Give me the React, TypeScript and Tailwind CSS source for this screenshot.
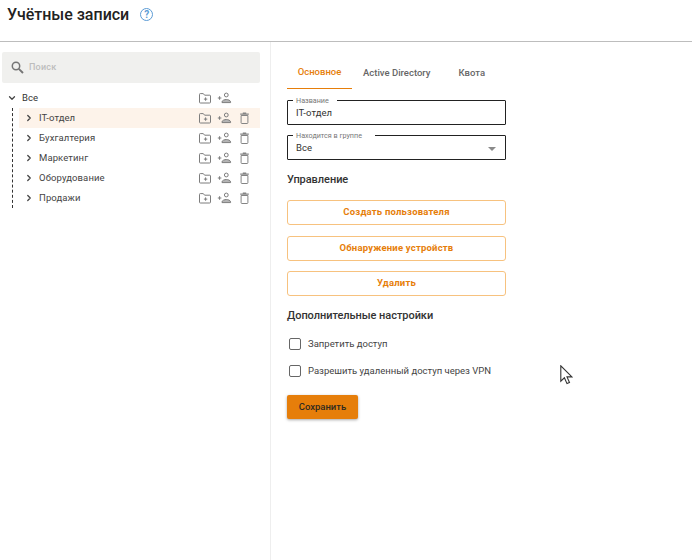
import React from "react";
import { ChevronDown, ChevronRight } from "lucide-react";

const groups = ["IT-отдел", "Бухгалтерия", "Маркетинг", "Оборудование", "Продажи"];

const SearchIcon = () => (
  <svg width="13" height="13" viewBox="0 0 13 13" fill="none" stroke="#757575" strokeWidth="1.5">
    <circle cx="5" cy="5" r="3.7" />
    <path d="M7.8 7.8l4.2 4.2" strokeWidth="1.9" />
  </svg>
);

const FolderPlus = () => (
  <svg width="14" height="14" viewBox="0 0 14 14" fill="none" stroke="#7d7d7d" strokeWidth="1">
    <path d="M1.5 3.5v7.7a.8.8 0 0 0 .8.8h9.4a.8.8 0 0 0 .8-.8V5a.8.8 0 0 0-.8-.8H6.6L5.3 2.6h-3a.8.8 0 0 0-.8.9z" />
    <path d="M7.6 6.4v3.4M5.9 8.1h3.4" />
  </svg>
);

const UserPlus = () => (
  <svg width="15" height="14" viewBox="0 0 15 14" fill="none" stroke="#7d7d7d" strokeWidth="1">
    <circle cx="9.3" cy="4" r="1.9" />
    <path d="M5 11.6v-.7c0-1.5 2.7-2.4 4.3-2.4s4.3.9 4.3 2.4v.7z" fill="#b5b5b5" />
    <path d="M2.6 5.2v3.6M.8 7h3.6" />
  </svg>
);

const Trash = () => (
  <svg width="11" height="14" viewBox="0 0 11 14" fill="none" stroke="#858585" strokeWidth="1">
    <path d="M2.1 4.5h6.8v7.2a.8.8 0 0 1-.8.8H2.9a.8.8 0 0 1-.8-.8z" />
    <path d="M1.2 3.2h8.6M3.8 2.2h3.4" strokeWidth="1.2" />
  </svg>
);

const TreeActions = ({ canDelete = true }: { canDelete?: boolean }) => (
  <div className="flex items-center ml-auto">
    <div className="w-[14px] flex justify-center"><FolderPlus /></div>
    <div className="w-[15px] ml-[5px] flex justify-center"><UserPlus /></div>
    <div className="w-[11px] ml-[7px] mr-[10px] flex justify-center">{canDelete && <Trash />}</div>
  </div>
);

const OutlinedField = ({ label, legendWidth, children }: { label: string; legendWidth: string; children: React.ReactNode }) => (
  <div className="relative h-[25px] w-[219px] rounded-[1px] border border-[#222222] pt-[2px] flex items-center">
    <span className={`absolute -top-[5px] left-[5px] h-[9px] bg-white px-[3px] text-[7.2px] leading-[9px] text-[#777777] ${legendWidth}`}>{label}</span>
    {children}
  </div>
);

const OutlineButton = ({ children }: { children: React.ReactNode }) => (
  <button className="h-[25px] w-[219px] rounded-[3px] border border-[#f7c27f] bg-white text-[9.5px] font-bold tracking-[0.2px] text-[#e67e0a]">
    {children}
  </button>
);

const Check = ({ label }: { label: string }) => (
  <label className="flex items-center h-[14px]">
    <span className="ml-[2px] h-[12px] w-[12px] rounded-[2px] border-[1.5px] border-[#666666]" />
    <span className="ml-[7px] text-[9.5px] text-[#444444]">{label}</span>
  </label>
);

export default function App() {
  return (
    <div className="relative h-[560px] w-[692px] overflow-hidden bg-white font-['Roboto',sans-serif] text-[#222222]">
      <header className="h-[42px] border-b border-[#bdbdbd] flex items-start pl-[7px] pt-[4px]">
        <h1 className="text-[16px] leading-[22px] font-medium">Учётные записи</h1>
        <span className="ml-[11px] mt-[4px] flex h-[13px] w-[13px] items-center justify-center rounded-full border-[1.5px] border-[#5b9bd5] text-[10px] font-bold leading-none text-[#5b9bd5]">?</span>
      </header>
      <div className="flex h-[518px]">
        <aside className="w-[271px] border-r border-[#eeeeee] pl-[2px] pt-[10px]">
          <div className="flex h-[31px] w-[258px] items-center rounded-[2px] bg-[#f0f0ee] pl-[9px]">
            <SearchIcon />
            <span className="ml-[5px] text-[9px] font-medium tracking-[0.2px] text-[#bdbdbd]">Поиск</span>
          </div>
          <div className="mt-[5px] w-[258px]">
            <div className="flex h-[20px] items-center text-[9.5px] tracking-[0.1px] text-[#333333]">
              <ChevronDown size={10} color="#444444" strokeWidth={3} className="ml-[5px]" />
              <span className="ml-[5px]">Все</span>
              <TreeActions canDelete={false} />
            </div>
            <div className="ml-[10px] border-l border-dashed border-[#333333]">
              {groups.map((name, i) => (
                <div key={name} className={`ml-[6px] flex h-[20px] items-center text-[9.5px] tracking-[0.1px] text-[#444444] ${i === 0 ? "bg-[#fdf3ea]" : ""}`}>
                  <ChevronRight size={10} color="#444444" strokeWidth={3} className="ml-[5px]" />
                  <span className="ml-[5px]">{name}</span>
                  <TreeActions />
                </div>
              ))}
            </div>
          </div>
        </aside>
        <main className="pl-[16px]">
          <nav className="flex h-[47px] text-[9.5px] font-medium text-[#666666]">
            <div className="flex w-[65px] items-center justify-center border-b border-[#e67e0a] pt-[15px] text-[#e67e0a]">Основное</div>
            <div className="ml-[11px] flex items-center pt-[15px]">Active Directory</div>
            <div className="ml-[28px] flex items-center pt-[15px]">Квота</div>
          </nav>
          <div className="mt-[11px] flex flex-col gap-[10px]">
            <OutlinedField label="Название" legendWidth="w-[44px]">
              <span className="ml-[8px] text-[9.5px] tracking-[0.1px] text-[#333333]">IT-отдел</span>
            </OutlinedField>
            <OutlinedField label="Находится в группе" legendWidth="w-[82px]">
              <span className="ml-[8px] text-[9.5px] tracking-[0.1px] text-[#333333]">Все</span>
              <span className="ml-auto mr-[9px] h-0 w-0 border-x-[4px] border-t-[4px] border-x-transparent border-t-[#8a8a8a]" />
            </OutlinedField>
          </div>
          <h2 className="mt-[13px] text-[11px] leading-[14px] font-medium tracking-[-0.05px] text-[#333333]">Управление</h2>
          <div className="mt-[13px] flex flex-col gap-[10.5px]">
            <OutlineButton>Создать пользователя</OutlineButton>
            <OutlineButton>Обнаружение устройств</OutlineButton>
            <OutlineButton>Удалить</OutlineButton>
          </div>
          <h2 className="mt-[13px] text-[11px] leading-[14px] font-medium tracking-[-0.05px] text-[#333333]">Дополнительные настройки</h2>
          <div className="mt-[14px] flex flex-col gap-[13px]">
            <Check label="Запретить доступ" />
            <Check label="Разрешить удаленный доступ через VPN" />
          </div>
          <button className="mt-[17px] h-[24px] w-[71px] rounded-[2px] bg-[#e67e0a] text-[9.5px] font-medium text-[#2e2a20] shadow-[0_1px_3px_rgba(0,0,0,0.35)]">
            Сохранить
          </button>
        </main>
      </div>
      <svg className="absolute left-[560px] top-[365px]" width="13" height="20" viewBox="0 0 13 20" fill="#ffffff" stroke="#333333" strokeWidth="1.1">
        <path d="M.8.8v15.4l3.6-3.4 2.6 5.8 2.5-1.1-2.5-5.6h4.9z" />
      </svg>
    </div>
  );
}
